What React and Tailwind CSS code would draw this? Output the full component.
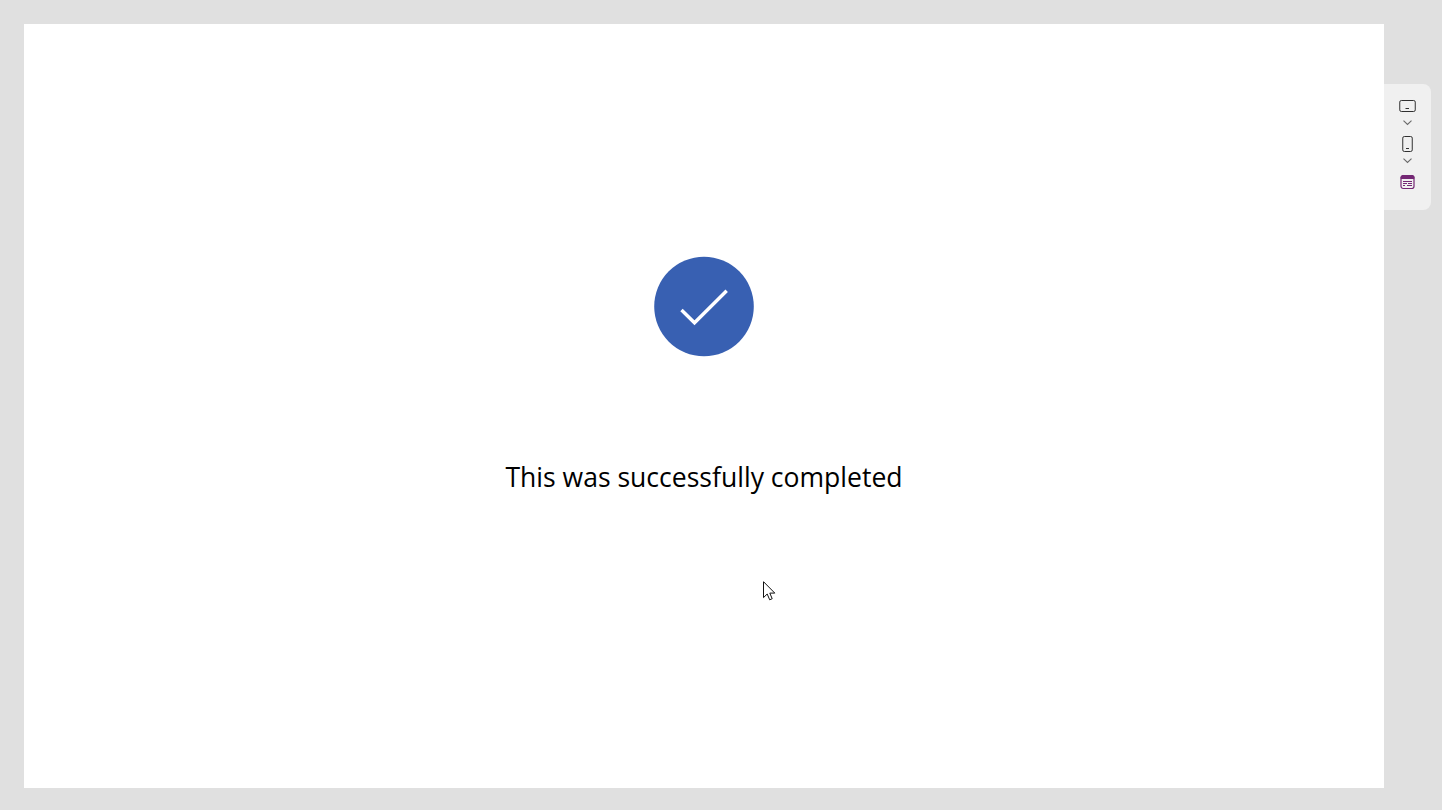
import React from "react";

function Chevron() {
  return (
    <svg className="h-2 w-[18px]" viewBox="0 0 18 8" fill="none">
      <path d="M5.5 2.6L9.5 6.5L13.5 2.6" stroke="#6b6b6b" strokeWidth="1.1" />
    </svg>
  );
}

function DeviceBar() {
  return (
    <aside className="mt-[84px] flex h-[126px] w-[47px] flex-col items-center rounded-r-lg bg-[#f0f0f0] pt-3.5 pr-px">
      <button className="flex flex-col items-center" aria-label="Tablet view">
        <svg className="h-4 w-[18px]" viewBox="0 0 18 16" fill="none" stroke="#303030">
          <rect x="1.75" y="2.5" width="15.5" height="11" rx="1.6" />
          <path d="M7.5 10.5H11" />
        </svg>
        <span className="mt-1"><Chevron /></span>
      </button>
      <button className="mt-2.5 flex flex-col items-center" aria-label="Phone view">
        <svg className="h-4 w-[18px]" viewBox="0 0 18 16" fill="none" stroke="#303030">
          <rect x="4.75" y="0.5" width="9.5" height="15" rx="1.6" />
          <path d="M8 12.5H11" />
        </svg>
        <span className="mt-1"><Chevron /></span>
      </button>
      <button className="mt-2.5" aria-label="Form view">
        <svg className="h-4 w-[18px]" viewBox="0 0 18 16" fill="none" stroke="#742774">
          <rect x="3" y="1.5" width="13" height="13" rx="2.2" strokeWidth="1.2" />
          <path d="M3 4.5V3.7a2.2 2.2 0 0 1 2.2-2.2h8.6a2.2 2.2 0 0 1 2.2 2.2V4.5z" fill="#742774" />
          <path d="M5 7.5H14M5 9.5H9M10 9.5H14M5 11.5H7M9 11.5H14" />
        </svg>
      </button>
    </aside>
  );
}

function Cursor() {
  return (
    <svg className="absolute left-[763px] top-[581px] h-5 w-[13px]" viewBox="0 0 13 20">
      <path
        d="M0.5 0.7V16.6L4.2 13L6.7 18.8L9.2 17.7L6.8 12.1H11.8z"
        fill="#fff"
        stroke="#111"
        strokeWidth="1"
      />
    </svg>
  );
}

function App() {
  return (
    <div className="relative flex h-screen overflow-hidden bg-[#e0e0e0] pl-6">
      <main className="mt-6 flex h-[764px] w-[1360px] flex-col items-center bg-white pt-[232px]">
        <svg className="h-[101px] w-[100px]" viewBox="0 0 100 101" fill="none">
          <circle cx="50" cy="50.5" r="49.8" fill="#3860b2" />
          <path d="M27.5 54L40.5 66.8L72.7 34.8" stroke="#fff" strokeWidth="3.4" />
        </svg>
        <h1 className="mt-[100px] font-['Open_Sans',sans-serif] text-[26.55px] leading-10 whitespace-nowrap text-black">
          This was successfully completed
        </h1>
      </main>
      <DeviceBar />
      <Cursor />
    </div>
  );
}

export default App;
